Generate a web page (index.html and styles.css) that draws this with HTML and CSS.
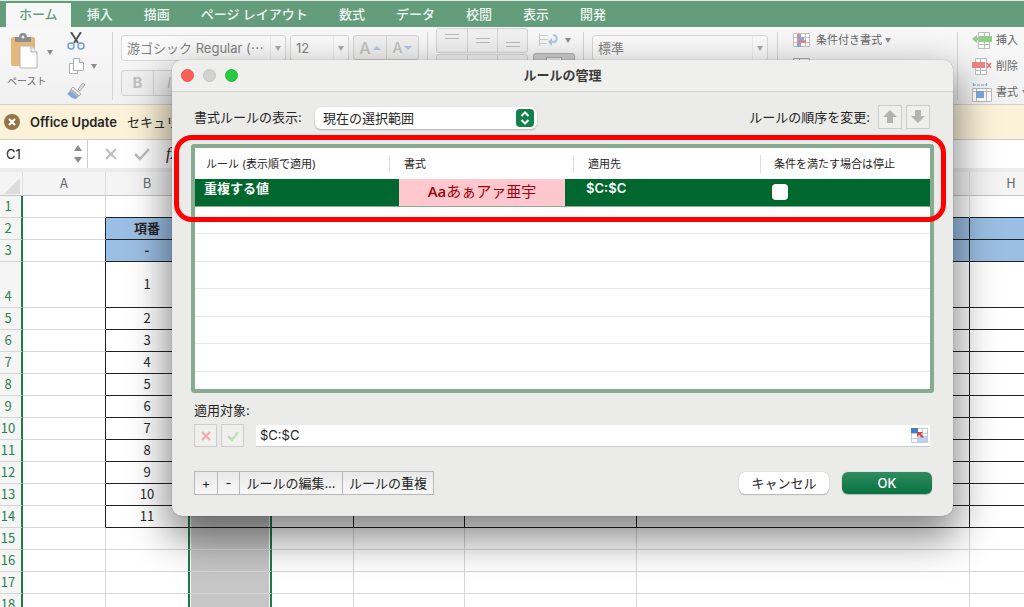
FILE: index.html
```html
<!DOCTYPE html>
<html lang="ja">
<head>
<meta charset="utf-8">
<title>ルールの管理</title>
<link rel="stylesheet" href="styles.css">
</head>
<body>
<div class="app">
  <nav class="tabs">
    <button class="tab tab-active">ホーム</button>
    <button class="tab">挿入</button>
    <button class="tab">描画</button>
    <button class="tab">ページ レイアウト</button>
    <button class="tab">数式</button>
    <button class="tab">データ</button>
    <button class="tab">校閲</button>
    <button class="tab">表示</button>
    <button class="tab">開発</button>
  </nav>

  <div class="ribbon">
    <div class="group group-clip">
      <button class="paste">
        <svg width="28" height="36" viewBox="0 0 28 36"><rect x="1" y="4" width="24" height="29" rx="2" fill="#e3b878"/><path d="M5 4h4a4 4 0 0 1 8 0h4v5H5z" fill="#8e8e8e"/><circle cx="13" cy="4" r="1.5" fill="#eee"/><path d="M10 13h11l6 6v16H10z" fill="#fff" stroke="#b5b5b5"/><path d="M21 13v6h6" fill="#eee" stroke="#b5b5b5"/></svg>
        <span>ペースト</span>
      </button>
      <span class="arrow arrow-paste"></span>
      <div class="clip-tools">
        <button class="tool" aria-label="切り取り"><svg width="18" height="18" viewBox="0 0 18 18" fill="none"><path d="M4 0l7 11M14 0L7 11" stroke="#555" stroke-width="2"/><circle cx="4" cy="14" r="3" stroke="#6fa0dc" stroke-width="1.5"/><circle cx="14" cy="14" r="3" stroke="#6fa0dc" stroke-width="1.5"/></svg></button>
        <button class="tool" aria-label="コピー"><svg width="18" height="18" viewBox="0 0 18 18" fill="#fff" stroke="#b0b0b0"><path d="M2.500 6.500h8v10h-8z"/><path d="M6.500 1.500h6l4 4v8h-10z"/><path d="M12.500 1.500v4h4"/></svg><span class="arrow"></span></button>
        <button class="tool" aria-label="書式のコピー"><svg width="19" height="18" viewBox="0 0 19 18"><path d="M11 7l5-6 2 2-5 6z" fill="#ddd" stroke="#aaa"/><path d="M6 5l8 7-2 2-8-7z" fill="#eee" stroke="#aaa"/><path d="M4 7l8 7-3 3C5 17 1 13 0 11c2 0 3-2 4-4z" fill="#7fa8d8"/><path d="M4 7l8 7-1 1-9-6z" fill="#b8b8b8"/></svg></button>
      </div>
    </div>
    <div class="group group-font">
      <div class="line">
        <button class="combo combo-font">游ゴシック Regular (⋯<span class="drop"><i class="arrow"></i></span></button>
        <button class="combo combo-size">12<span class="drop"><i class="arrow"></i></span></button>
        <div class="segments">
          <button class="seg seg-a" aria-label="拡大"><b>A</b><svg width="8" height="6" viewBox="0 0 8 6"><path d="M0 5l4-4 4 4z" fill="#a9c8ea"/></svg></button>
          <button class="seg seg-a seg-small" aria-label="縮小"><b>A</b><svg width="8" height="6" viewBox="0 0 8 6"><path d="M0 1l4 4 4-4z" fill="#a9c8ea"/></svg></button>
        </div>
      </div>
      <div class="segments segments-style">
        <button class="seg"><b>B</b></button>
        <button class="seg"><i>I</i></button>
      </div>
    </div>
    <div class="group group-align">
      <div class="align-rows">
        <div class="segments">
          <button class="seg" aria-label="上揃え"><svg width="14" height="18" viewBox="0 0 14 18" stroke="#bbb"><path d="M0 2.500h14M0 6.500h14"/></svg></button>
          <button class="seg" aria-label="上下中央"><svg width="14" height="18" viewBox="0 0 14 18" stroke="#bbb"><path d="M0 6.500h14M0 10.500h14"/></svg></button>
          <button class="seg" aria-label="下揃え"><svg width="14" height="18" viewBox="0 0 14 18" stroke="#bbb"><path d="M0 10.500h14M0 14.500h14"/></svg></button>
        </div>
        <div class="segments">
          <button class="seg" aria-label="左揃え"></button>
          <button class="seg" aria-label="中央揃え"></button>
          <button class="seg" aria-label="右揃え"></button>
        </div>
      </div>
      <div class="wrap-tools">
        <button class="tool tool-wrap" aria-label="折り返し"><svg width="20" height="14" viewBox="0 0 20 14" fill="none"><path d="M1 2.500h8M1 6.500h8M1 10.500h6M.5 0v13" stroke="#ccc"/><path d="M14 2c5 0 5 7 0 7h-2" stroke="#a9c8ea" stroke-width="2"/><path d="M13 5v8l-4-4z" fill="#a9c8ea"/></svg><span class="arrow"></span></button>
        <button class="merge" aria-label="結合"><span></span></button>
      </div>
    </div>
    <div class="group group-number">
      <button class="combo combo-number">標準<span class="drop"><i class="arrow"></i></span></button>
    </div>
    <div class="group group-styles">
      <button class="tool"><svg width="17" height="14" viewBox="0 0 17 14"><path d="M.5.5h16v13H.5zM.5 4.500h16M.5 9.500h16M12.500.5v13" fill="#fff" stroke="#c4c4c4"/><path d="M4 1h4v3H4zM4 7h9v3H4z" fill="#ee8585"/><path d="M4 4h7v3H4zM4 10h4v4H4z" fill="#7fb0e8"/></svg><span class="tool-text">条件付き書式</span><span class="arrow"></span></button>
      <button class="tool" aria-label="表の書式"><svg width="17" height="14" viewBox="0 0 17 14"><path d="M.5.5h16v13H.5zM.5 4.500h16M6.500.5v13" fill="#fff" stroke="#aaa"/></svg></button>
    </div>
    <div class="group group-cells">
      <button class="tool"><svg width="20" height="17" viewBox="0 0 20 17"><path d="M6.500.5h11v16h-11zM12.500.5v16M6.500 12.500h11" fill="#fff" stroke="#bbb"/><path d="M7 4h13v6H7zM5 3v3h2v2H5v3L0 7z" fill="#8fce85"/></svg><span class="tool-text">挿入</span></button>
      <button class="tool"><svg width="20" height="17" viewBox="0 0 20 17"><path d="M3.500.5h11v16h-11zM8.500.5v16M3.500 12.500h11" fill="#fff" stroke="#bbb"/><path d="M0 4h13v6H0z" fill="#ef8585"/><path d="M15 5l4 5M19 5l-4 5" stroke="#e57070" stroke-width="1.500"/></svg><span class="tool-text">削除</span></button>
      <button class="tool"><svg width="20" height="19" viewBox="0 0 20 19"><path d="M1 2h14M1.500 0v4M14.500 0v4" stroke="#6fa0dc" stroke-dasharray="3 1"/><path d="M.5 5.500h19v13H.5zM.5 8.500h19M4.500 5.500v13M14.500 5.500v13" fill="#fff" stroke="#bbb"/><path d="M4 8h8v7H4z" fill="#7fa8dc"/></svg><span class="tool-text">書式</span><span class="arrow"></span></button>
    </div>
  </div>

  <div class="message">
    <button class="message-close" aria-label="閉じる"><svg width="16" height="16" viewBox="0 0 16 16"><circle cx="8" cy="8" r="8" fill="#94744a"/><path d="M5 5l6 6M11 5l-6 6" stroke="#fff" stroke-width="2"/></svg></button>
    <strong>Office Update</strong>
    <span>セキュリ</span>
  </div>

  <div class="formula">
    <div class="namebox">
      <input class="name-input" aria-label="名前ボックス" value="C1">
      <svg width="8" height="20" viewBox="0 0 8 20" fill="#8c8c8c"><path d="M0 7l4-6 4 6zM0 13l4 6 4-6z"/></svg>
    </div>
    <button class="formula-btn" aria-label="キャンセル"><svg width="14" height="14" viewBox="0 0 14 14"><path d="M2 2l10 10M12 2L2 12" stroke="#bdbdbd" stroke-width="2"/></svg></button>
    <button class="formula-btn" aria-label="入力"><svg width="16" height="14" viewBox="0 0 16 14" fill="none"><path d="M1 7l5 5L15 2" stroke="#bdbdbd" stroke-width="2.500"/></svg></button>
    <em>fx</em>
  </div>

  <div class="sheet-wrap">
    <table class="sheet">
      <colgroup><col class="c-num"><col class="c-std"><col class="c-std"><col class="c-std"><col class="c-d"><col class="c-e"><col class="c-f"><col class="c-g"><col class="c-std"></colgroup>
      <thead><tr><th class="corner"><svg width="16" height="16" viewBox="0 0 16 16"><path d="M16 0v16H0z" fill="#dcdcdc"/></svg></th><th>A</th><th>B</th><th>C</th><th>D</th><th>E</th><th>F</th><th>G</th><th>H</th></tr></thead>
      <tbody>
        <tr class="before"><th>1</th><td></td><td></td><td></td><td></td><td></td><td></td><td></td><td></td></tr>
        <tr class="boxed blue"><th>2</th><td></td><td>項番</td><td></td><td></td><td></td><td></td><td></td><td></td></tr>
        <tr class="boxed blue"><th>3</th><td></td><td>-</td><td></td><td></td><td></td><td></td><td></td><td></td></tr>
        <tr class="boxed tall"><th>4</th><td></td><td>1</td><td></td><td></td><td></td><td></td><td></td><td></td></tr>
        <tr class="boxed"><th>5</th><td></td><td>2</td><td></td><td></td><td></td><td></td><td></td><td></td></tr>
        <tr class="boxed"><th>6</th><td></td><td>3</td><td></td><td></td><td></td><td></td><td></td><td></td></tr>
        <tr class="boxed"><th>7</th><td></td><td>4</td><td></td><td></td><td></td><td></td><td></td><td></td></tr>
        <tr class="boxed"><th>8</th><td></td><td>5</td><td></td><td></td><td></td><td></td><td></td><td></td></tr>
        <tr class="boxed"><th>9</th><td></td><td>6</td><td></td><td></td><td></td><td></td><td></td><td></td></tr>
        <tr class="boxed"><th>10</th><td></td><td>7</td><td></td><td></td><td></td><td></td><td></td><td></td></tr>
        <tr class="boxed"><th>11</th><td></td><td>8</td><td></td><td></td><td></td><td></td><td></td><td></td></tr>
        <tr class="boxed"><th>12</th><td></td><td>9</td><td></td><td></td><td></td><td></td><td></td><td></td></tr>
        <tr class="boxed"><th>13</th><td></td><td>10</td><td></td><td></td><td></td><td></td><td></td><td></td></tr>
        <tr class="boxed"><th>14</th><td></td><td>11</td><td></td><td></td><td></td><td></td><td></td><td></td></tr>
        <tr><th>15</th><td></td><td></td><td></td><td></td><td></td><td></td><td></td><td></td></tr>
        <tr><th>16</th><td></td><td></td><td></td><td></td><td></td><td></td><td></td><td></td></tr>
        <tr><th>17</th><td></td><td></td><td></td><td></td><td></td><td></td><td></td><td></td></tr>
        <tr><th>18</th><td></td><td></td><td></td><td></td><td></td><td></td><td></td><td></td></tr>
      </tbody>
    </table>
  </div>
</div>

<section class="dialog" role="dialog" aria-labelledby="dialog-title">
  <header class="titlebar">
    <div class="lights">
      <button class="light light-close" aria-label="閉じる"></button>
      <button class="light" aria-label="しまう"></button>
      <button class="light light-zoom" aria-label="拡大"></button>
    </div>
    <h1 id="dialog-title">ルールの管理</h1>
  </header>
  <div class="dialog-body">
    <div class="top-row">
      <label for="scope">書式ルールの表示:</label>
      <div class="select-box">
        <select id="scope"><option>現在の選択範囲</option></select>
        <svg class="select-mark" width="18" height="18" viewBox="0 0 18 18" fill="none"><rect width="18" height="18" rx="4" fill="#13804c"/><path d="M5.500 7L9 3.500 12.500 7M5.500 11L9 14.500l3.500-3.500" stroke="#fff" stroke-width="2"/></svg>
      </div>
      <span class="order-label">ルールの順序を変更:</span>
      <button class="square" aria-label="上へ"><svg width="14" height="14" viewBox="0 0 14 14"><path d="M7 0l7 7h-4v6H4V7H0z" fill="#b3b3b3"/></svg></button>
      <button class="square" aria-label="下へ"><svg width="14" height="14" viewBox="0 0 14 14"><path d="M7 13l7-7h-4V0H4v6H0z" fill="#b3b3b3"/></svg></button>
    </div>

    <div class="list">
      <table class="rules">
        <colgroup><col class="r-name"><col class="r-format"><col class="r-range"><col></colgroup>
        <thead><tr><th><span>ルール (表示順で適用)</span></th><th><span>書式</span></th><th><span>適用先</span></th><th><span>条件を満たす場合は停止</span></th></tr></thead>
        <tbody>
          <tr class="selected"><td class="name">重複する値</td><td class="format"><div class="preview"><span>Aa</span>あぁアァ亜宇</div></td><td class="range">$C:$C</td><td class="stop"><input type="checkbox" aria-label="条件を満たす場合は停止"></td></tr>
          <tr><td colspan="4"></td></tr><tr><td colspan="4"></td></tr><tr><td colspan="4"></td></tr><tr><td colspan="4"></td></tr><tr><td colspan="4"></td></tr><tr><td colspan="4"></td></tr>
        </tbody>
      </table>
    </div>

    <label class="target-label" for="target">適用対象:</label>
    <div class="target-row">
      <button class="square square-small" aria-label="取り消し"><svg width="12" height="12" viewBox="0 0 12 12"><path d="M2 2l8 8M10 2l-8 8" stroke="#f2aaaa" stroke-width="2"/></svg></button>
      <button class="square square-small" aria-label="確定"><svg width="12" height="12" viewBox="0 0 12 12" fill="none"><path d="M1 6l4 4 6-8" stroke="#b5dcae" stroke-width="2"/></svg></button>
      <div class="target-box">
        <input id="target" value="$C:$C">
        <button class="picker" aria-label="範囲を選択"><svg width="17" height="15" viewBox="0 0 17 15"><path d="M.5.5h16v14H.5zM.5 5.500h16M.5 10.500h16M6.500.5v14M11.500.5v14" fill="#fff" stroke="#c3ccd8"/><path d="M0 0h7v5H0z" fill="#3f7fcb"/><path d="M7 8h9v6H7z" fill="#bcd2ee"/><path d="M6 4h6l-2 2 3 3-2 1-3-3-2 2z" fill="#cf4b4b"/></svg></button>
      </div>
    </div>

    <footer class="actions">
      <div class="rule-buttons">
        <button class="rb rb-add">+</button><button class="rb rb-add">-</button><button class="rb rb-edit">ルールの編集...</button><button class="rb rb-copy">ルールの重複</button>
      </div>
      <button class="push">キャンセル</button>
      <button class="push push-ok">OK</button>
    </footer>
  </div>
  <div class="highlight"></div>
</section>
</body>
</html>
```

FILE: styles.css
```css
* { box-sizing: border-box; }

body {
  margin: 0;
  height: 100vh;
  overflow: hidden;
  position: relative;
  background: #fff;
  color: #262626;
  font: 13px/18px Inter, "Noto Sans CJK JP", sans-serif;
}

button, input, select {
  margin: 0;
  padding: 0;
  border: 0;
  background: none;
  color: inherit;
  font: inherit;
}

svg { display: block; flex: none; }

.app { display: flex; flex-direction: column; height: 100%; overflow: hidden; }

/* Ribbon tabs */
.tabs {
  display: flex;
  gap: 1px;
  flex: none;
  height: 27px;
  padding: 2px 0 0 6px;
  border-top: 1px solid #e3ebe6;
  background: #649d7c;
}
.tab {
  padding: 0 15px 3px;
  color: #eef5f0;
  font-weight: 500;
  white-space: nowrap;
}
.tab-active { padding: 0 13px 3px; background: #f7f7f7; color: #649d7c; }

/* Ribbon */
.ribbon {
  display: flex;
  flex: none;
  height: 78px;
  overflow: hidden;
  border-bottom: 1px solid #d2d2d2;
  background: linear-gradient(#f8f8f8, #f1f1f1);
  color: #666;
  font-size: 11px;
}
.group { display: flex; flex: none; position: relative; }
.group + .group::before {
  content: "";
  width: 1px;
  height: 68px;
  margin: 5px 8px 0 0;
  background: #d4d4d4;
}
.arrow {
  flex: none;
  border: solid transparent;
  border-width: 5px 3px 0;
  border-top-color: #8a8a8a;
}
.group-clip { width: 112px; padding-left: 7px; }
.paste {
  display: flex;
  flex-direction: column;
  align-items: flex-start;
  width: 40px;
  padding-top: 6px;
  font-size: 10px;
  white-space: nowrap;
}
.paste svg { margin-left: 3px; }
.paste span { margin-top: 3px; }
.arrow-paste { margin-top: 23px; }
.clip-tools { display: flex; flex-direction: column; gap: 7px; margin-left: 14px; padding-top: 5px; }
.tool { display: flex; align-items: center; gap: 6px; white-space: nowrap; }

.group-font { flex-wrap: wrap; width: 315px; }
.group-font .line { display: flex; gap: 4px; margin-top: 8px; }
.combo {
  display: flex;
  align-items: center;
  justify-content: space-between;
  height: 26px;
  padding-left: 5px;
  border: 1px solid #d9d9d9;
  border-radius: 3px;
  background: #fafafa;
  color: #808080;
  font-size: 13px;
  white-space: nowrap;
}
.drop { display: flex; align-items: center; justify-content: center; width: 15px; height: 24px; border-left: 1px solid #ececec; }
.drop .arrow { border-top-color: #aaa; }
.combo-font { width: 165px; }
.combo-size { width: 59px; }
.segments { display: flex; height: 25px; border: 1px solid #d2d2d2; border-radius: 3px; background: #f0f0f0; }
.seg { display: flex; align-items: center; justify-content: center; width: 30px; color: #c0c0c0; font-size: 15px; }
.seg + .seg { border-left: 1px solid #d2d2d2; }
.seg-a { width: 32px; gap: 2px; }
.seg-a b { font-size: 16px; font-weight: 500; }
.seg-small b { font-size: 14px; }
.segments-style { height: 26px; margin: -32px 0 0 9px; }
.segments-style .seg { width: 31px; }

.group-align { width: 156px; }
.align-rows { display: flex; flex-direction: column; gap: 1px; padding-top: 1px; }
.wrap-tools { display: flex; flex-direction: column; gap: 6px; margin-left: 5px; padding-top: 6px; }
.tool-wrap { padding-left: 6px; height: 14px; }
.merge { display: flex; justify-content: center; width: 42px; height: 24px; padding: 3px 12px; border: 1px solid #aaa; border-radius: 3px; background: #ccc; }
.merge span { width: 17px; height: 14px; border: 1px solid #aaa; background: #eee; }
.group-number { width: 194px; }
.combo-number { width: 176px; margin-top: 8px; }
.group-styles { width: 180px; flex-direction: column; gap: 7px; padding: 4px 0 0 16px; }
.group + .group-styles::before, .group + .group-cells::before { position: absolute; left: 0; top: 0; }
.group-styles .tool { gap: 3px; height: 18px; }
.group-styles svg { margin-right: 3px; }
.group-cells { flex-direction: column; gap: 8px; padding: 4px 0 0 15px; }
.group-cells .tool { height: 18px; gap: 4px; }

/* Message bar */
.message {
  display: flex;
  flex: none;
  align-items: center;
  gap: 10px;
  height: 34px;
  padding-left: 4px;
  background: #fcf2d9;
  white-space: nowrap;
}
.message strong { font-weight: 600; }

/* Formula bar */
.formula {
  display: flex;
  flex: none;
  align-items: stretch;
  gap: 16px;
  height: 33px;
  border-top: 1px solid #cfcfcf;
  border-bottom: 4px solid #ececec;
  background: #fff;
}
.namebox { display: flex; align-items: center; width: 88px; padding: 0 5px 0 6px; border-right: 1px solid #ccc; }
.name-input { flex: 1; min-width: 0; }
.formula-btn { display: flex; align-items: center; }
.formula em { align-self: center; font-family: "Liberation Serif", serif; font-size: 16px; line-height: 24px; }

/* Spreadsheet grid */
.sheet-wrap { flex: 1; min-height: 0; overflow: hidden; }
.sheet {
  width: 1053px;
  table-layout: fixed;
  border-spacing: 0;
  font: 13px/18px "Noto Sans CJK JP", sans-serif;
}
.c-num { width: 23px; }
.c-std { width: 83px; }
.c-d { width: 82px; }
.c-e { width: 111px; }
.c-f { width: 172px; }
.c-g { width: 333px; }
.sheet th, .sheet td { height: 22px; padding: 0; border: solid #d6d6d6; border-width: 0 1px 1px 0; font-weight: 400; text-align: center; }
.sheet thead th { height: 24px; padding-bottom: 2px; border-color: #c4c4c4; border-right-color: #ddd; background: #f4f4f4; color: #666; }
.sheet thead .corner { padding: 4px 0 0 4px; }
.sheet tbody th { padding: 0 5px 2px 0; border-right: 2px solid #1f7a48; background: #f5f5f5; color: #2c8152; vertical-align: bottom; }
.sheet .tall th, .sheet .tall td { height: 46px; }
.sheet td:nth-child(3) { padding-bottom: 1px; border-right-color: #1f7a48; }
.sheet td:nth-child(4) {
  border-left: 1px solid #1f7a48;
  border-right: 2px solid #1f7a48;
  background: #c6c6c6;
  box-shadow: inset 1px 0 #fff, inset -1px 0 #fff;
}
.before td:nth-child(n+3), .boxed td:nth-child(n+3) { border-bottom-color: #222; }
.boxed td:nth-child(2), .boxed td:nth-child(n+5) { border-right-color: #222; }
.blue td:nth-child(n+3) { background: #9bbfe4; font-weight: 700; }

/* Rule manager dialog */
.dialog {
  position: absolute;
  top: 60px;
  left: 172px;
  right: 71px;
  border-radius: 10px;
  background: #ebebe9;
  box-shadow: 0 0 1px rgba(0, 0, 0, .5), 0 18px 40px 4px rgba(0, 0, 0, .48);
}
.titlebar {
  display: grid;
  grid-template-columns: 1fr auto 1fr;
  align-items: center;
  height: 32px;
  padding: 0 9px 1px;
  border-bottom: 1px solid #d2d2d0;
  border-radius: 10px 10px 0 0;
  background: #efefed;
}
.titlebar h1 { margin: 0; color: #3c3c3c; font-size: 13px; font-weight: 700; }
.lights { display: flex; gap: 9px; }
.light { width: 13px; height: 13px; border: 1px solid #c5c5c3; border-radius: 50%; background: #d2d2d0; }
.light-close { border-color: #ee5048; background: #fe5f57; }
.light-zoom { border-color: #23b93a; background: #28c840; }

.dialog-body { padding: 12px 19px 21px; }
.top-row { display: flex; align-items: center; height: 25px; padding: 0 4px 0 3px; }
.top-row label { width: 121px; white-space: nowrap; }
.select-box { position: relative; width: 222px; margin-top: 3px; }
.select-box select {
  display: block;
  width: 100%;
  height: 22px;
  padding: 0 24px 0 8px;
  border-radius: 6px;
  appearance: none;
  background: #fff;
  box-shadow: 0 1px 2px rgba(0, 0, 0, .25);
}
.select-mark { position: absolute; top: 2px; right: 3px; pointer-events: none; }
.order-label { margin: 0 8px 0 auto; }
.square { display: flex; align-items: center; justify-content: center; width: 24px; height: 24px; border: 1px solid #ccc; background: #efefee; }
.square + .square { margin-left: 4px; }
.square-small { width: 23px; height: 23px; }

.list { margin-top: 15px; height: 249px; overflow: hidden; border: 4px solid #86ab8f; border-radius: 3px; background: #fff; }
.rules { width: 100%; table-layout: fixed; border-spacing: 0; }
.r-name { width: 195px; }
.r-format { width: 184px; }
.r-range { width: 187px; }
.rules th { height: 31px; padding: 0; font-size: 11px; font-weight: 400; text-align: left; white-space: nowrap; }
.rules th span { display: block; padding-left: 14px; border-right: 1px solid #ddd; }
.rules th:first-child span { padding-left: 11px; }
.rules th:last-child span { border-right: 0; padding-left: 13px; }
.rules td { height: 27px; padding: 0; border-bottom: 1px solid #e8e8e8; }
.rules tr:nth-child(odd) td { height: 28px; }
.rules .selected td { border-bottom-color: #86ab8f; background: #00682e; color: #fff; font-weight: 600; vertical-align: top; }
.rules .selected .name { padding-left: 9px; }
.rules .selected .format { padding: 0 9px; }
.rules .selected .range { padding-left: 12px; }
.rules .selected .stop { padding: 5px 0 0 11px; }
.preview { height: 27px; background: #ffc7ce; color: #9c0006; font: 400 15px/24px "Noto Sans CJK JP", sans-serif; text-align: center; }
.preview span { font-family: "Open Sans", sans-serif; font-weight: 600; }
.stop input { display: block; width: 16px; height: 16px; border-radius: 4px; appearance: none; background: #fff; }

.target-label { display: block; margin: 8px 0 0 3px; }
.target-row { display: flex; align-items: center; margin-top: 5px; padding: 0 4px 0 3px; }
.target-box { display: flex; align-items: center; flex: 1; height: 22px; margin-left: 12px; padding: 0 2px 0 4px; border-bottom: 1px solid #c8c8c8; background: #fff; }
.target-box input { flex: 1; min-width: 0; }
.actions { display: flex; align-items: center; margin-top: 24px; padding: 0 2px 0 3px; }
.rule-buttons { display: flex; margin-right: auto; border: 1px solid #b8b8b8; background: linear-gradient(#e8e8e8, #f8f8f8); }
.rb { height: 22px; white-space: nowrap; }
.rb + .rb { border-left: 1px solid #b8b8b8; }
.rb-add { width: 22px; }
.rb-edit { width: 103px; }
.rb-copy { width: 91px; }
.push { width: 90px; height: 22px; margin-left: 13px; border-radius: 6px; background: #fff; box-shadow: 0 0 1px rgba(0, 0, 0, .3), 0 1px 1px rgba(0, 0, 0, .2); }
.push-ok { background: linear-gradient(#318c60, #067340); color: #fff; font-weight: 500; }

/* Annotation frame over the selected rule */
.highlight {
  position: absolute;
  top: 75px;
  left: 2px;
  right: 7px;
  height: 87px;
  border: 5px solid #f00;
  border-radius: 18px;
  pointer-events: none;
}
```
